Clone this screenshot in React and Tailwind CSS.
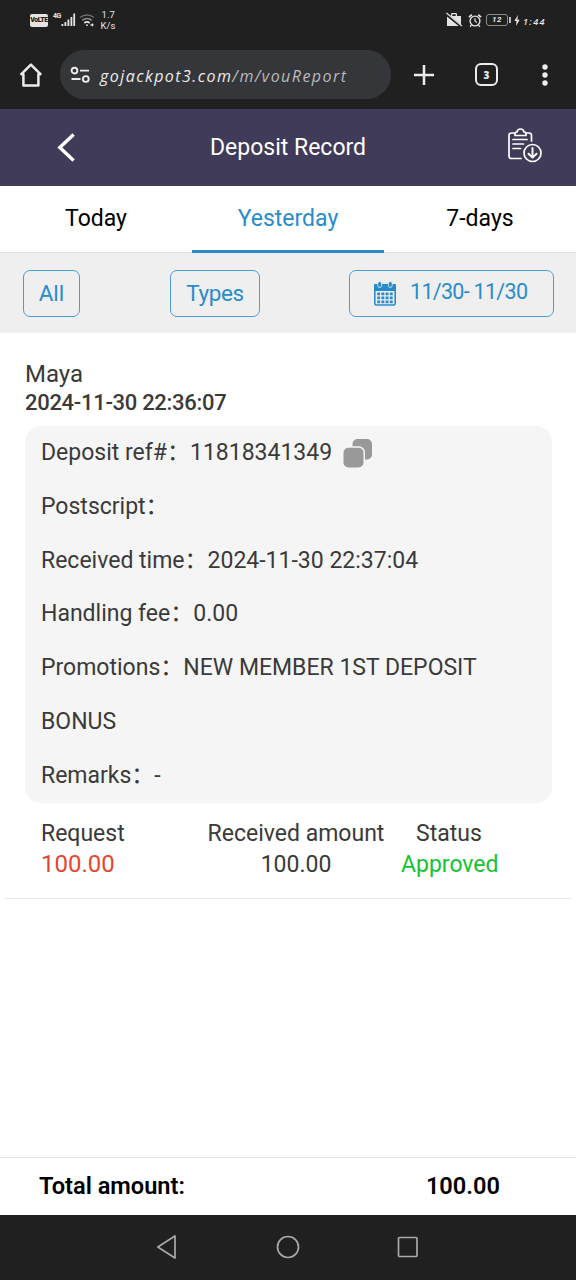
import React from "react";

const details = [
  { label: "Deposit ref#", value: "11818341349", copy: true },
  { label: "Postscript", value: "" },
  { label: "Received time", value: "2024-11-30 22:37:04" },
  { label: "Handling fee", value: "0.00" },
  { label: "Promotions", value: "NEW MEMBER 1ST DEPOSIT BONUS" },
  { label: "Remarks", value: "-" },
];

const StatusBar = () => (
  <div className="flex h-10 items-center justify-between pl-[30px] pr-[30px] text-[#e4e4e4]">
    <div className="flex items-center">
      <span className="flex h-[13px] w-[18px] items-center justify-center rounded-[2px] bg-[#e4e4e4] text-[7px] font-black leading-none tracking-[-0.5px] text-[#202020]">
        VoLTE
      </span>
      <span className="ml-[5px] mb-[7px] text-[7px] font-bold leading-none tracking-[-0.6px]">4G</span>
      <svg width="15" height="14" viewBox="0 0 15 14" fill="currentColor">
        <rect x="0.5" y="11" width="1.8" height="2" />
        <rect x="3.5" y="9" width="1.8" height="4" />
        <rect x="6.5" y="6.5" width="1.8" height="6.5" />
        <rect x="9.5" y="4" width="1.8" height="9" />
        <rect x="12.3" y="0.5" width="1.8" height="12.5" />
      </svg>
      <svg className="ml-[3px]" width="17" height="14" viewBox="0 0 17 14" fill="none" stroke="currentColor">
        <path d="M1 4.5a11 11 0 0 1 14 0" strokeWidth="1.5" opacity="0.4" />
        <path d="M3.2 7.3a7.5 7.5 0 0 1 9.6 0" strokeWidth="1.6" opacity="0.55" />
        <path d="M5.3 10a4.4 4.4 0 0 1 5.4 0" strokeWidth="1.7" />
        <circle cx="8" cy="12.2" r="0.9" fill="currentColor" stroke="none" />
        <path d="M11.5 11.8h3M13.4 10.4v2.8" strokeWidth="1.3" />
      </svg>
      <div className="ml-[5px] text-[9.5px] leading-[11px]">
        <div className="pl-px">1.7</div>
        <div>K/s</div>
      </div>
    </div>

    <div className="flex items-center">
      <svg width="17" height="16" viewBox="0 0 17 16">
        <path d="M1 4h4V2.2Q5 1 6.2 1h3.6Q11 1 11 2.2V4h4v10H1zM6.3 4h3.4V2.3H6.3z" fill="currentColor" />
        <path d="M0 2l16 13" stroke="#202020" strokeWidth="2.6" />
        <path d="M0.5 1l15.5 13" stroke="currentColor" strokeWidth="1.2" />
      </svg>
      <svg className="ml-[5px]" width="14" height="15" viewBox="0 0 14 15" fill="none" stroke="currentColor">
        <circle cx="7" cy="8" r="4.9" strokeWidth="1.4" />
        <path d="M7 5.2V8l2 1.6M3.4 12l-1.3 1.8M10.6 12l1.3 1.8" strokeWidth="1.2" />
        <path d="M1 4.2L3.8 1.6M13 4.2l-2.8-2.6" strokeWidth="1.7" />
      </svg>
      <div className="ml-[4px] flex h-[12px] w-[22px] items-center justify-center rounded-[3px] border border-[#8d8d8d] text-[8px] font-bold italic leading-none tracking-[0.5px]">
        12
      </div>
      <span className="ml-px h-[6px] w-[2px] bg-[#bdbdbd]" />
      <svg className="ml-[3px]" width="6" height="11" viewBox="0 0 6 11" fill="currentColor">
        <path d="M4 0L0.3 6h2.2L2 11l3.7-6.3H3.4z" />
      </svg>
      <span className="ml-[3px] mt-[3px] w-[23px] whitespace-nowrap font-['Open_Sans'] text-[9px] font-semibold italic leading-none tracking-[1.4px]">
        1:44
      </span>
    </div>
  </div>
);

const AddressBar = () => (
  <div className="flex h-[69px] items-center text-[#ececec]">
    <svg className="ml-[19px]" width="24" height="26" viewBox="0 0 24 26" fill="none" stroke="currentColor" strokeWidth="2.5">
      <path d="M1.6 12.8L11.9 2.6l10.3 10.2M4.4 11.4v12h15v-12" strokeLinejoin="round" />
    </svg>
    <div className="ml-[17px] flex h-[49px] w-[331px] items-center rounded-full bg-[#35363a] pl-[10px]">
      <svg width="21" height="18" viewBox="0 0 21 18" fill="none" stroke="currentColor" strokeWidth="1.9">
        <circle cx="4.5" cy="4.6" r="2.9" />
        <path d="M10 4.6h9M1.5 13h9" />
        <circle cx="15.8" cy="13" r="2.9" />
      </svg>
      <span className="ml-[9px] mt-[2px] whitespace-nowrap font-['Open_Sans'] text-[16px] font-medium italic tracking-[1.45px]">
        gojackpot3.com<span className="text-[#b9babc]">/m/vouReport</span>
      </span>
    </div>
    <svg className="ml-[23px]" width="20" height="20" viewBox="0 0 20 20" stroke="currentColor" strokeWidth="2.5">
      <path d="M10 0v20M0 10h20" />
    </svg>
    <div className="ml-[41px] flex h-[23px] w-[23px] items-center justify-center rounded-[6px] border-[2.5px] border-[#ececec] font-['Open_Sans'] text-[10px] font-extrabold leading-none">
      3
    </div>
    <svg className="ml-[43px]" width="8" height="22" viewBox="0 0 8 22" fill="currentColor">
      <circle cx="4" cy="3" r="2.7" />
      <circle cx="4" cy="11" r="2.7" />
      <circle cx="4" cy="19" r="2.7" />
    </svg>
  </div>
);

const Header = () => (
  <header className="grid h-[77px] grid-cols-[1fr_auto_1fr] items-center bg-[#3f3b58] pl-[56px] pr-[56px] text-white">
    <svg width="20" height="32" viewBox="0 0 20 32" fill="none" stroke="currentColor" strokeWidth="3.4">
      <path d="M17.6 2.5L3.8 15.5l13.8 13" />
    </svg>
    <h1 className="text-[23px] leading-none">Deposit Record</h1>
    <svg className="-mr-[23px] mb-[4px] justify-self-end" width="36" height="36" viewBox="0 0 36 36" fill="none" stroke="currentColor" strokeWidth="1.7" strokeLinecap="round" strokeLinejoin="round">
      <path d="M8 5H4.5Q2 5 2 7.5V28Q2 30.5 4.500 30.5H14M19 5h3Q24.5 5 24.5 7.5V13" />
      <path d="M8 7.5V5.5Q8 4 10 4Q10.5 1 13.5 1T17 4Q19 4 19 5.5V7.5Z" />
      <path d="M6 11.500h14M6 16h10.5M6 20.5h7.5" />
      <circle cx="25.5" cy="25" r="8.5" />
      <path d="M25.5 20v9.5M21.5 25.800l4 3.800 4-3.800" strokeWidth="2" />
    </svg>
  </header>
);

const CalendarIcon = () => (
  <svg width="22" height="25" viewBox="0 0 22 25">
    <rect x="0.8" y="3.8" width="20.4" height="20.2" rx="1.5" fill="none" stroke="#288ccb" strokeWidth="1.6" />
    <path d="M0 4q0-1 1-1h20q1 0 1 1v6H0z" fill="#288ccb" />
    <rect x="3.8" y="0.5" width="3.8" height="6" rx="1.9" fill="#288ccb" stroke="#efefef" strokeWidth="0.8" />
    <rect x="14.4" y="0.5" width="3.8" height="6" rx="1.9" fill="#288ccb" stroke="#efefef" strokeWidth="0.8" />
    <path d="M3.2 12.8h16M3.2 16.8h16M3.2 20.8h16" stroke="#288ccb" strokeWidth="2.8" strokeDasharray="2.9 1.3" />
  </svg>
);

const CopyIcon = () => (
  <svg width="30" height="30" viewBox="0 0 30 30" fill="#999">
    <rect x="9.5" y="1" width="19.5" height="20.5" rx="5" />
    <rect x="-1" y="8.200" width="23" height="23" rx="6" fill="#f5f5f5" />
    <rect x="0.5" y="9.7" width="20" height="19.8" rx="5" />
  </svg>
);

const App = () => {
  return (
    <div className="flex h-[1280px] w-[576px] flex-col overflow-hidden bg-[#202020] font-['Roboto','Noto_Sans_CJK_SC',sans-serif] text-[23px] text-[#3a3a3a]">
      <StatusBar />
      <AddressBar />
      <Header />

      <nav className="grid h-[67px] grid-cols-3 border-b border-[#e2e2e2] bg-white text-center leading-[66px] text-black">
        <div>Today</div>
        <div className="h-[67px] border-b-[3px] border-[#288ccb] text-[#288ccb]">Yesterday</div>
        <div>7-days</div>
      </nav>

      <div className="flex h-[80px] items-center justify-between bg-[#efefef] pl-[23px] pr-[22px] text-[#288ccb]">
        <button className="h-[47px] w-[57px] rounded-[7px] border border-[#4a9fd2] text-[22.5px] leading-[45px]">All</button>
        <button className="ml-[1px] h-[47px] w-[90px] rounded-[7px] border border-[#4a9fd2] text-[22.5px] leading-[45px] tracking-[-0.4px]">
          Types
        </button>
        <button className="flex h-[47px] w-[205px] items-center rounded-[7px] border border-[#4a9fd2] pl-[24px]">
          <CalendarIcon />
          <span className="ml-[14px] mb-[2px] whitespace-nowrap text-[21.5px] leading-[44px] tracking-[-0.7px]">11/30- 11/30</span>
        </button>
      </div>

      <main className="flex-1 bg-white">
        <section className="mx-[5px] h-[566px] border-b border-[#e8e8e8] px-5 pt-[26px]">
          <div className="text-[24px] leading-[31px]">Maya</div>
          <div className="text-[22px] font-medium leading-[26px] tracking-[-0.3px]">2024-11-30 22:36:07</div>

          <div className="mt-[10px] h-[377px] w-[527px] rounded-[16px] bg-[#f5f5f5] px-4 leading-[53.8px]">
            {details.map((row) => (
              <div key={row.label} className="w-[460px]">
                {`${row.label}：${row.value}`}
                {row.copy && (
                  <span className="ml-[11px] inline-block h-[32px] align-middle">
                    <CopyIcon />
                  </span>
                )}
              </div>
            ))}
          </div>

          <div className="mt-[15px] flex pl-4 leading-[31px]">
            <div className="w-[150px]">
              <div>Request</div>
              <div className="text-[24px] text-[#e8452f]">100.00</div>
            </div>
            <div className="w-[210px] text-center">
              <div>Received amount</div>
              <div>100.00</div>
            </div>
            <div className="w-[96px] text-center">
              <div>Status</div>
              <div className="text-[#14c335]">Approved</div>
            </div>
          </div>
        </section>
      </main>

      <footer className="flex h-[58px] items-center justify-between border-t border-[#e6e6e6] bg-white pl-[39px] pr-[76px] text-[23.6px] font-semibold text-black">
        <span>Total amount:</span>
        <span>100.00</span>
      </footer>

      <div className="flex h-[65px] items-center bg-[#202020] pb-[2px] text-[#a9a9a9]">
        <svg className="ml-[156px]" width="21" height="26" viewBox="0 0 21 26" fill="none" stroke="currentColor" strokeWidth="1.7">
          <path d="M19 2v22L1.8 13z" strokeLinejoin="round" />
        </svg>
        <svg className="ml-[99px]" width="24" height="24" viewBox="0 0 24 24" fill="none" stroke="currentColor" strokeWidth="1.7">
          <circle cx="12" cy="12" r="10.5" />
        </svg>
        <svg className="ml-[97px]" width="22" height="22" viewBox="0 0 22 22" fill="none" stroke="currentColor" strokeWidth="1.7">
          <rect x="1.5" y="1.5" width="18.500" height="19" rx="1" />
        </svg>
      </div>
    </div>
  );
};

export default App;
